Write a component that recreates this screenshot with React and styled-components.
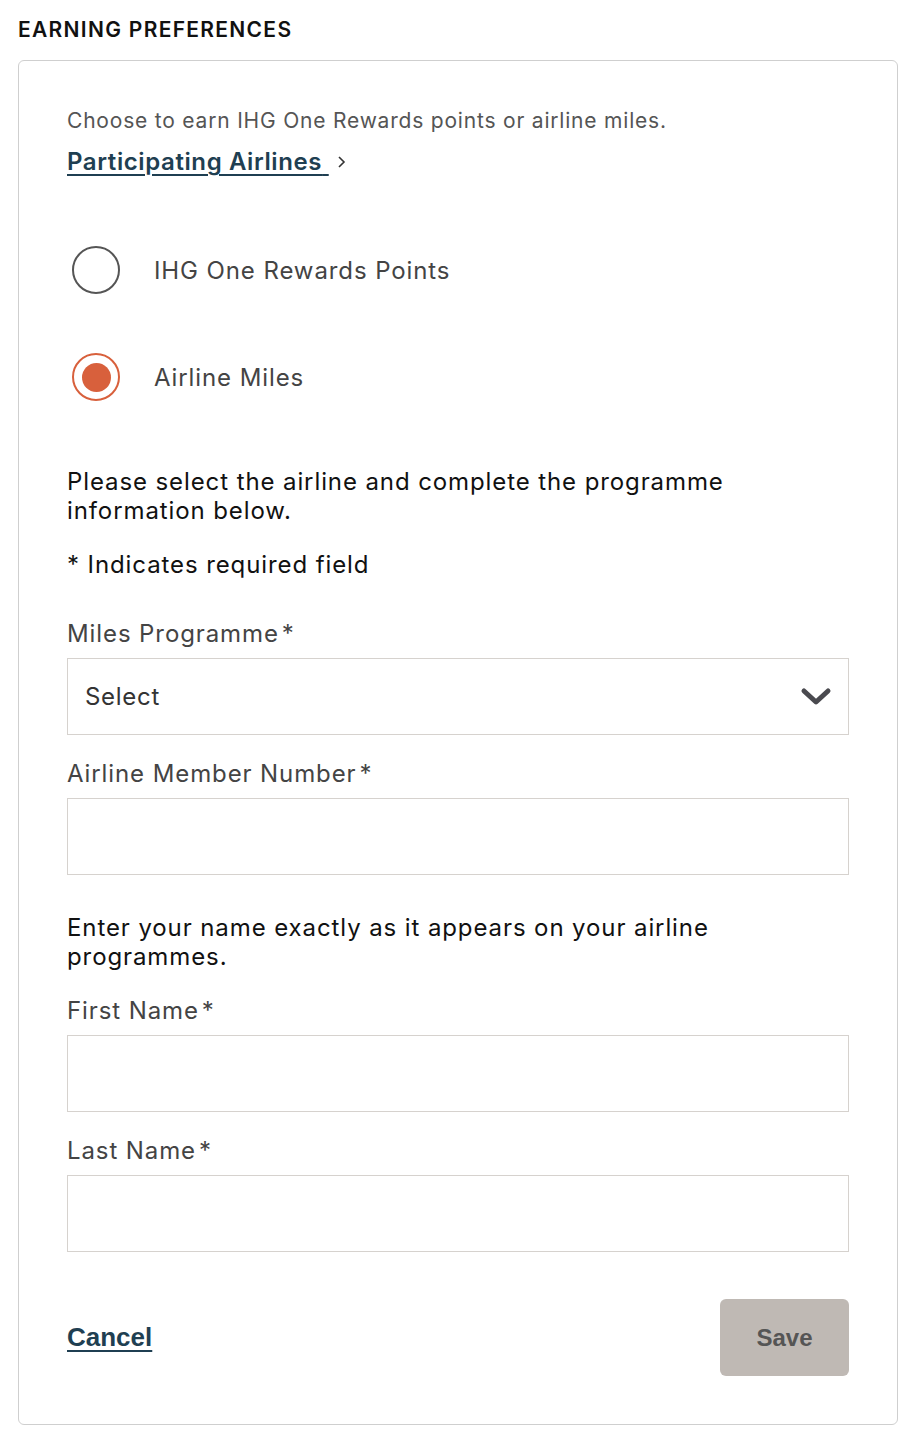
import React from 'react';
import styled, { createGlobalStyle } from 'styled-components';

const GlobalStyle = createGlobalStyle`
  body {
    margin: 0;
    background: #fff;
    font-family: Inter, "Noto Sans", sans-serif;
  }
`;

const Page = styled.div`
  padding: 15px 18px 19px;
`;

const Heading = styled.h2`
  margin: 0 0 15px;
  font-size: 21px;
  font-weight: 600;
  letter-spacing: 1.3px;
  color: #111;
  line-height: 30px;
`;

const Card = styled.div`
  border: 1px solid #cfcfcf;
  border-radius: 6px;
  padding: 44px 48px 48px 48px;
`;

const Intro = styled.p`
  margin: 0;
  font-size: 21px;
  letter-spacing: 0.8px;
  line-height: 32px;
  color: #555;
`;

const LinkRow = styled.div`
  display: flex;
  align-items: center;
  gap: 8px;
  margin-top: 10px;
`;

const TextLink = styled.a`
  color: #1f3f52;
  font-size: ${p => p.$size || 24}px;
  font-weight: 600;
  letter-spacing: ${p => (p.$arial ? 0 : 0.6)}px;
  text-decoration: underline;
  text-underline-offset: 4px;
  text-decoration-thickness: 2px;
  font-family: ${p => (p.$arial ? '"Liberation Sans", Arial, sans-serif' : 'inherit')};
`;

const RadioGroup = styled.div`
  display: flex;
  flex-direction: column;
  gap: 59px;
  margin-top: 70px;
  padding-left: 5px;
`;

const RadioRow = styled.label`
  display: flex;
  align-items: center;
  gap: 34px;
  font-size: 24px;
  letter-spacing: 0.9px;
  color: #444;
`;

const RadioCircle = styled.span`
  box-sizing: border-box;
  width: 48px;
  height: 48px;
  border-radius: 50%;
  border: 2.5px solid ${p => (p.$checked ? '#d8603c' : '#555')};
  display: flex;
  align-items: center;
  justify-content: center;
  &::after {
    content: '';
    display: ${p => (p.$checked ? 'block' : 'none')};
    width: 29px;
    height: 29px;
    border-radius: 50%;
    background: #d8603c;
  }
`;

const Note = styled.p`
  margin: ${p => p.$top || 0}px 0 0;
  max-width: 720px;
  font-size: 24px;
  letter-spacing: 0.9px;
  line-height: 29px;
  color: #111;
`;

const Field = styled.div`
  margin-top: ${p => p.$top || 0}px;
`;

const Label = styled.div`
  font-size: 24px;
  letter-spacing: 0.9px;
  line-height: 30px;
  color: #444;
  margin-bottom: 9px;
`;

const Star = styled.span`
  margin-left: 3px;
`;

const Box = styled.div`
  box-sizing: border-box;
  height: 77px;
  border: 1px solid #d6d2ce;
  display: flex;
  align-items: center;
  justify-content: space-between;
  padding: 0 16px 0 17px;
  font-size: 24px;
  letter-spacing: 0.7px;
  color: #333;
`;

const Actions = styled.div`
  display: flex;
  justify-content: space-between;
  align-items: center;
  margin-top: 47px;
`;

const SaveButton = styled.button`
  width: 129px;
  height: 77px;
  border: none;
  border-radius: 6px;
  background: #bfb9b4;
  color: #555;
  font-family: "Liberation Sans", Arial, sans-serif;
  font-weight: 700;
  font-size: 24px;
`;

const Chevron = () => (
  <svg width="32" height="20" viewBox="0 0 32 20">
    <path d="M4 4 L16 15 L28 4" fill="none" stroke="#4a4a4f" strokeWidth="5" strokeLinecap="round" strokeLinejoin="round" />
  </svg>
);

const SmallChevron = () => (
  <svg width="10" height="14" viewBox="0 0 10 14">
    <path d="M2 2 L7 7 L2 12" fill="none" stroke="#333" strokeWidth="1.6" />
  </svg>
);

const FieldLabel = ({ children }) => (
  <Label>
    {children}
    <Star>*</Star>
  </Label>
);

export default function App() {
  return (
    <Page>
      <GlobalStyle />
      <Heading>EARNING PREFERENCES</Heading>
      <Card>
        <Intro>Choose to earn IHG One Rewards points or airline miles.</Intro>
        <LinkRow>
          <TextLink href="#">Participating Airlines{'\u00a0'}</TextLink>
          <SmallChevron />
        </LinkRow>

        <RadioGroup>
          <RadioRow>
            <RadioCircle />
            IHG One Rewards Points
          </RadioRow>
          <RadioRow>
            <RadioCircle $checked />
            Airline Miles
          </RadioRow>
        </RadioGroup>

        <Note $top={66}>Please select the airline and complete the programme information below.</Note>
        <Note $top={25}>* Indicates required field</Note>

        <Field $top={40}>
          <FieldLabel>Miles Programme</FieldLabel>
          <Box>
            Select
            <Chevron />
          </Box>
        </Field>
        <Field $top={24}>
          <FieldLabel>Airline Member Number</FieldLabel>
          <Box />
        </Field>

        <Note $top={38}>Enter your name exactly as it appears on your airline programmes.</Note>

        <Field $top={25}>
          <FieldLabel>First Name</FieldLabel>
          <Box />
        </Field>
        <Field $top={24}>
          <FieldLabel>Last Name</FieldLabel>
          <Box />
        </Field>

        <Actions>
          <TextLink href="#" $arial $size={26}>Cancel</TextLink>
          <SaveButton>Save</SaveButton>
        </Actions>
      </Card>
    </Page>
  );
}
